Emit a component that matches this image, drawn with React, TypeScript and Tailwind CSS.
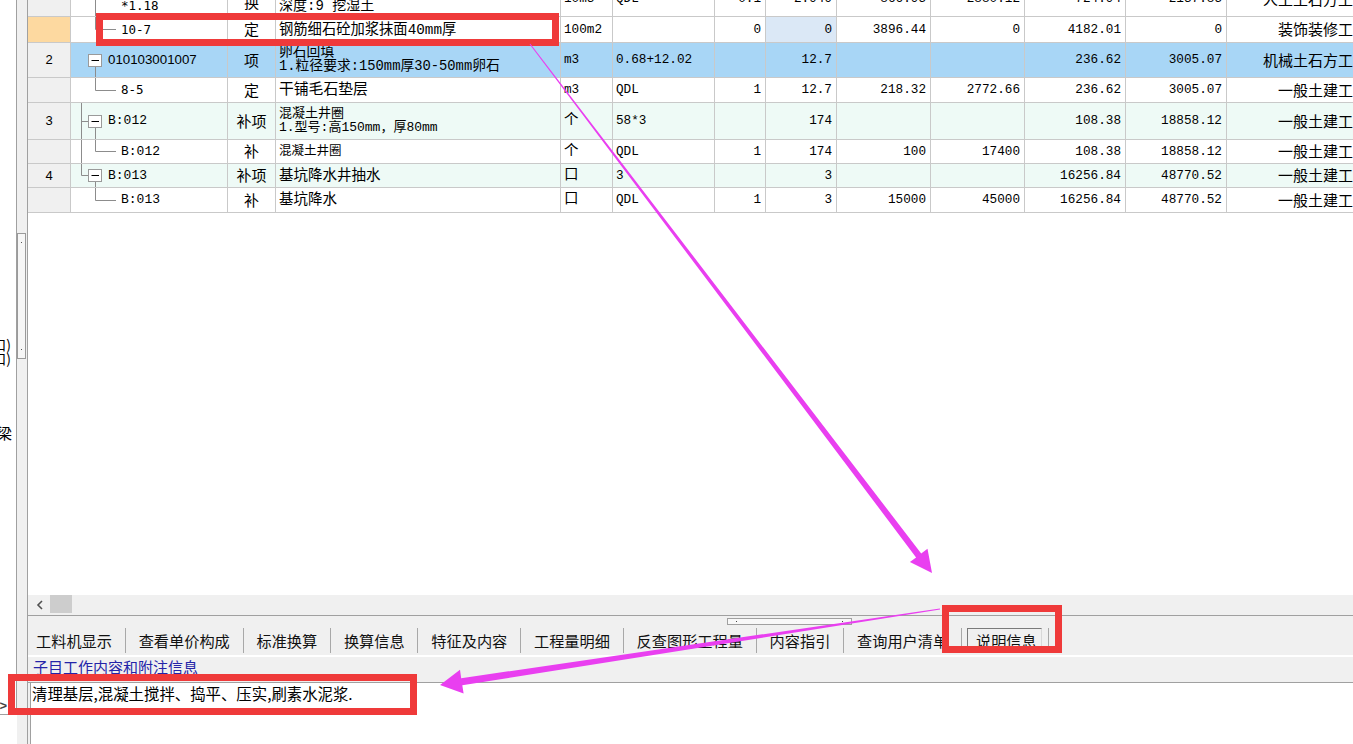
import React from "react";

// 清单/定额 grid with 说明信息 panel, annotated by red boxes and arrows

type Tree = {
  kind: "child" | "parent";
  last?: boolean;
  rail?: "none" | "full" | "top";
};

type Row = {
  h: number;
  no: string;
  noBg: string;
  bg: string;
  code: string[];
  codeFont: string;
  tree: Tree;
  type: string;
  typeCls?: string;
  name: string[];
  nameCls: string;
  unit: string;
  expr: string;
  f: string;
  q: string;
  qBg?: string;
  p: string;
  a: string;
  up: string;
  tot: string;
  pro: string;
};

const LINE = "border-r border-b border-[#c9c9c9]";
const NUM = "font-['Liberation_Mono','Noto_Sans_CJK_SC',monospace] text-[12.7px]";
const SMONO = "font-['DejaVu_Sans_Mono',monospace] text-[12.5px]";
const CMONO = "font-['Liberation_Mono',monospace] text-[13px]";
const SANS = "font-['Liberation_Sans',sans-serif] text-[13.3px]";

const rows: Row[] = [
  {
    h: 35, no: "", noBg: "bg-[#f0f0f0]", bg: "bg-white",
    code: ["1-60", "*1.18"], codeFont: SMONO, tree: { kind: "child" },
    type: "换", typeCls: "pt-[6px]",
    name: ["挖一般土方", "深度:9 挖湿土"], nameCls: "text-[14px]",
    unit: "10m3", expr: "QDL", f: "0.1", q: "2.949", p: "866.95", a: "2880.12",
    up: "724.94", tot: "2137.85", pro: "人工土石方工",
  },
  {
    h: 26, no: "", noBg: "bg-[#fdd9a0]", bg: "bg-white",
    code: ["10-7"], codeFont: SMONO, tree: { kind: "child", last: true },
    type: "定", name: ["钢筋细石砼加浆抹面40mm厚"], nameCls: "text-[14.3px]",
    unit: "100m2", expr: "", f: "0", q: "0", qBg: "bg-[#dbe8f6]", p: "3896.44", a: "0",
    up: "4182.01", tot: "0", pro: "装饰装修工",
  },
  {
    h: 35, no: "2", noBg: "bg-[#f0f0f0]", bg: "bg-[#a8d6f6]",
    code: ["010103001007"], codeFont: SANS, tree: { kind: "parent", rail: "none" },
    type: "项", name: ["卵石回填", "1.粒径要求:150mm厚30-50mm卵石"], nameCls: "text-[13.8px]",
    unit: "m3", expr: "0.68+12.02", f: "", q: "12.7", p: "", a: "",
    up: "236.62", tot: "3005.07", pro: "机械土石方工",
  },
  {
    h: 25, no: "", noBg: "bg-[#f0f0f0]", bg: "bg-white",
    code: ["8-5"], codeFont: SMONO, tree: { kind: "child", last: true },
    type: "定", name: ["干铺毛石垫层"], nameCls: "text-[14.8px]",
    unit: "m3", expr: "QDL", f: "1", q: "12.7", p: "218.32", a: "2772.66",
    up: "236.62", tot: "3005.07", pro: "一般土建工",
  },
  {
    h: 37, no: "3", noBg: "bg-[#f0f0f0]", bg: "bg-[#eefaf6]",
    code: ["B:012"], codeFont: CMONO, tree: { kind: "parent", rail: "full" },
    type: "补项", name: ["混凝土井圈", "1.型号:高150mm，厚80mm"], nameCls: "text-[13px]",
    unit: "个", expr: "58*3", f: "", q: "174", p: "", a: "",
    up: "108.38", tot: "18858.12", pro: "一般土建工",
  },
  {
    h: 24, no: "", noBg: "bg-[#f0f0f0]", bg: "bg-white",
    code: ["B:012"], codeFont: CMONO, tree: { kind: "child", last: true, rail: "full" },
    type: "补", name: ["混凝土井圈"], nameCls: "text-[12.5px]",
    unit: "个", expr: "QDL", f: "1", q: "174", p: "100", a: "17400",
    up: "108.38", tot: "18858.12", pro: "一般土建工",
  },
  {
    h: 24, no: "4", noBg: "bg-[#f0f0f0]", bg: "bg-[#eefaf6]",
    code: ["B:013"], codeFont: CMONO, tree: { kind: "parent", rail: "top" },
    type: "补项", name: ["基坑降水井抽水"], nameCls: "text-[14.5px]",
    unit: "口", expr: "3", f: "", q: "3", p: "", a: "",
    up: "16256.84", tot: "48770.52", pro: "一般土建工",
  },
  {
    h: 25, no: "", noBg: "bg-[#f0f0f0]", bg: "bg-white",
    code: ["B:013"], codeFont: CMONO, tree: { kind: "child", last: true },
    type: "补", name: ["基坑降水"], nameCls: "text-[14.5px]",
    unit: "口", expr: "QDL", f: "1", q: "3", p: "15000", a: "45000",
    up: "16256.84", tot: "48770.52", pro: "一般土建工",
  },
];

const tabs = [
  "工料机显示",
  "查看单价构成",
  "标准换算",
  "换算信息",
  "特征及内容",
  "工程量明细",
  "反查图形工程量",
  "内容指引",
  "查询用户清单",
  "说明信息",
];

function TreeLines({ tree, h }: { tree: Tree; h: number }) {
  const H = h - 1;
  const cy = Math.floor(H / 2) + 0.5;
  const c = "#8c8c8c";
  return (
    <svg className="absolute left-0 top-0" width={156} height={H}>
      {tree.rail && tree.rail !== "none" && (
        <>
          <line x1={10.5} y1={0} x2={10.5} y2={tree.rail === "full" ? H : cy} stroke={c} />
          {tree.kind === "parent" && <line x1={10.5} y1={cy} x2={17.5} y2={cy} stroke={c} />}
        </>
      )}
      {tree.kind === "child" ? (
        <>
          <line x1={24.5} y1={0} x2={24.5} y2={tree.last ? cy : H} stroke={c} />
          <line x1={24.5} y1={cy} x2={45} y2={cy} stroke={c} />
        </>
      ) : (
        <>
          <line x1={24.5} y1={cy + 6} x2={24.5} y2={H} stroke={c} />
          <rect x={17.5} y={cy - 6} width={13} height={12} fill="#fff" stroke="#9a9a9a" />
          <line x1={20.5} y1={cy} x2={28} y2={cy} stroke="#000" />
        </>
      )}
    </svg>
  );
}

function GridRow({ r }: { r: Row }) {
  return (
    <>
      <div className={`flex items-center justify-center ${LINE} ${r.noBg} font-['Liberation_Sans',sans-serif] text-[13px]`}>
        {r.no}
      </div>
      <div className={`relative flex flex-col justify-center ${LINE} ${r.bg} ${r.codeFont} leading-[14px] ${r.tree.kind === "parent" ? "pl-[37px]" : "pl-[50px]"}`}>
        <TreeLines tree={r.tree} h={r.h} />
        {r.code.map((c) => (
          <span key={c} className="relative whitespace-nowrap">{c}</span>
        ))}
      </div>
      <div className={`flex items-center justify-center ${LINE} ${r.bg} text-[15px] ${r.typeCls ?? ""}`}>{r.type}</div>
      <div className={`flex flex-col justify-center overflow-hidden ${LINE} ${r.bg} pl-[3px] font-['Liberation_Mono','Noto_Sans_CJK_SC',monospace] leading-[14px] ${r.nameCls}`}>
        {r.name.map((n) => (
          <span key={n} className="whitespace-nowrap">{n}</span>
        ))}
      </div>
      <div className={`flex items-center ${LINE} ${r.bg} pl-[3px] ${NUM} ${r.unit.length === 1 && r.unit > "z" ? "text-[14.5px]" : ""}`}>{r.unit}</div>
      <div className={`flex items-center ${LINE} ${r.bg} pl-[3px] ${NUM}`}>{r.expr}</div>
      {[r.f, r.q, r.p, r.a, r.up, r.tot].map((v, i) => (
        <div
          key={i}
          className={`flex items-center justify-end ${LINE} ${i === 1 && r.qBg ? r.qBg : r.bg} pr-[4px] ${NUM}`}
        >
          {v}
        </div>
      ))}
      <div className={`flex items-center justify-end overflow-hidden whitespace-nowrap border-b border-[#c9c9c9] ${r.bg} text-[15px]`}>
        {r.pro}
      </div>
    </>
  );
}

export default function App() {
  return (
    <div className="relative h-[744px] w-[1353px] overflow-hidden bg-white font-['Noto_Sans_CJK_SC',sans-serif] text-black">
      <div className="flex h-full">
        {/* left tree panel, mostly scrolled out of view */}
        <div className="flex h-[715px] w-[17px] shrink-0 flex-col overflow-hidden border-r border-b border-[#a0a0a0] bg-white text-[14px] leading-[14px]">
          <div className="h-[337px] shrink-0" />
          <div className="flex justify-end whitespace-nowrap pr-[5px]">(内口)</div>
          <div className="flex justify-end whitespace-nowrap pr-[5px]">(外口)</div>
          <div className="h-[61px] shrink-0" />
          <div className="flex justify-end whitespace-nowrap pr-[4px] text-[15px]">框架梁</div>
          <div className="h-[259px] shrink-0" />
          <div className="flex justify-end pr-[9px] font-['Liberation_Sans',sans-serif] text-[13px] font-bold text-[#444]">&gt;</div>
        </div>

        {/* vertical splitter with thumb */}
        <div className="w-[11px] shrink-0 border-r border-[#a0a0a0] bg-[#f0f0f0]">
          <div className="mt-[233px] flex h-[126px] w-[9px] flex-col items-center justify-between border border-[#9a9a9a] bg-[#f6f6f6] py-[8px]">
            <span className="h-px w-px bg-[#555]" />
            <span className="h-px w-px bg-[#555]" />
          </div>
        </div>

        {/* main area */}
        <div className="flex min-w-0 flex-1 flex-col bg-[#f0f0f0]">
          <div className="h-[595px] shrink-0 overflow-hidden bg-white">
            <div className="-mt-[18px] grid grid-cols-[43px_157px_48px_285px_52px_102px_51px_71px_94px_94px_101px_101px_126px] grid-rows-[35px_26px_35px_25px_37px_24px_24px_25px]">
              {rows.map((r, i) => (
                <GridRow key={i} r={r} />
              ))}
            </div>
          </div>

          {/* horizontal scrollbar */}
          <div className="flex h-[21px] shrink-0 items-start border-b border-[#a0a0a0] bg-[#f0f0f0]">
            <svg className="ml-[8px] mt-[5px]" width={8} height={10} viewBox="0 0 8 10">
              <path d="M6 1 L2 5 L6 9" fill="none" stroke="#505050" strokeWidth={1.6} />
            </svg>
            <div className="ml-[6px] h-[18px] w-[22px] bg-[#cdcdcd]" />
          </div>

          {/* tabs */}
          <div className="relative flex h-[39px] shrink-0 items-center bg-[#f0f0f0] pl-[8px] pt-[9px] text-[15.2px] leading-[20px] text-[#111]">
            <div className="absolute left-[699px] top-[2px] flex h-[7px] w-[125px] items-center justify-between border border-[#a0a0a0] bg-[#f8f8f8] px-[8px]">
              <span className="h-px w-px bg-[#444]" />
              <span className="h-px w-px bg-[#444]" />
            </div>
            {tabs.map((t, i) => (
              <React.Fragment key={t}>
                {i > 0 && <span className="h-[25px] w-px shrink-0 bg-[#a8a8a8]" />}
                {t === "说明信息" ? (
                  <span className="ml-[5px] mr-[6px] flex h-[24px] items-center whitespace-nowrap border border-t-[#7a7a7a] border-l-[#7a7a7a] border-r-[#d8d8d8] border-b-[#d8d8d8] pl-[8px] pr-[4px]">
                    {t}
                  </span>
                ) : (
                  <span className={`whitespace-nowrap ${i === 0 ? "pr-[12.85px]" : "px-[12.85px]"}`}>{t}</span>
                )}
              </React.Fragment>
            ))}
            <span className="h-[25px] w-px shrink-0 bg-[#a8a8a8]" />
          </div>
          <div className="h-[2px] shrink-0 bg-white" />

          {/* description panel */}
          <div className="h-[26px] shrink-0 border-b border-[#a0a0a0] bg-[#f0f0f0] pl-[5px] text-[15px] leading-[20px] text-[#2424a8]">
            子目工作内容和附注信息
          </div>
          <div className="ml-[2px] flex-1 border-l border-[#a0a0a0] bg-white pl-[1px] pt-[1px] text-[15.4px] leading-[18px]">
            清理基层,混凝土搅拌、捣平、压实,刷素水泥浆.
          </div>
        </div>
      </div>

      {/* annotations */}
      <div className="pointer-events-none absolute inset-0">
        <div className="absolute left-[96px] top-[13px] h-[33px] w-[463px] border-[7px] border-[#ef3a3a]" />
        <div className="absolute left-[942px] top-[605px] h-[48px] w-[120px] border-[7px] border-[#ef3a3a]" />
        <div className="absolute left-[8px] top-[674px] h-[41px] w-[409px] border-[7px] border-[#ef3a3a]" />
        <svg className="absolute left-0 top-0" width={1353} height={744}>
          <polygon
            fill="#e93ff0"
            points="530.4,43.7 921.2,553.5 927.5,548.8 932,573 909.9,562.1 916.1,557.4 529.6,44.3"
          />
          <polygon
            fill="#e93ff0"
            points="939.9,608.5 461.2,678.2 460,669.8 440,685 463.6,693.6 462.3,685.2 940.1,609.5"
          />
        </svg>
      </div>
    </div>
  );
}
